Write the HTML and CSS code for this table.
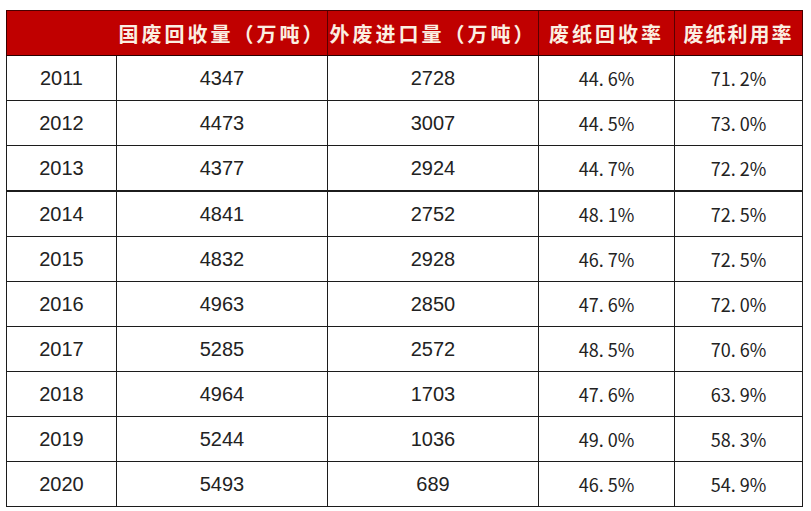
FILE: index.html
```html
<!DOCTYPE html>
<html lang="zh-CN">
<head>
<meta charset="utf-8">
<link rel="stylesheet" href="styles.css">
</head>
<body>
<table class="data">
  <colgroup>
    <col class="c1"><col class="c2"><col class="c3"><col class="c4"><col class="c5">
  </colgroup>
  <thead>
    <tr>
      <th class="h-first"></th>
      <th class="h-plain">国废回收量（万吨）</th>
      <th>外废进口量（万吨）</th>
      <th>废纸回收率</th>
      <th>废纸利用率</th>
    </tr>
  </thead>
  <tbody>
    <tr><td>2011</td><td>4347</td><td class="grey">2728</td><td class="pct">44<span class="dot">.</span>6%</td><td class="pct">71<span class="dot">.</span>2%</td></tr>
    <tr><td>2012</td><td>4473</td><td class="grey">3007</td><td class="pct">44<span class="dot">.</span>5%</td><td class="pct">73<span class="dot">.</span>0%</td></tr>
    <tr class="thick"><td>2013</td><td>4377</td><td class="grey">2924</td><td class="pct">44<span class="dot">.</span>7%</td><td class="pct">72<span class="dot">.</span>2%</td></tr>
    <tr><td>2014</td><td>4841</td><td class="grey">2752</td><td class="pct">48<span class="dot">.</span>1%</td><td class="pct">72<span class="dot">.</span>5%</td></tr>
    <tr><td>2015</td><td>4832</td><td class="grey">2928</td><td class="pct">46<span class="dot">.</span>7%</td><td class="pct">72<span class="dot">.</span>5%</td></tr>
    <tr><td>2016</td><td>4963</td><td class="grey">2850</td><td class="pct">47<span class="dot">.</span>6%</td><td class="pct">72<span class="dot">.</span>0%</td></tr>
    <tr><td>2017</td><td>5285</td><td class="grey">2572</td><td class="pct">48<span class="dot">.</span>5%</td><td class="pct">70<span class="dot">.</span>6%</td></tr>
    <tr><td>2018</td><td>4964</td><td class="grey">1703</td><td class="pct">47<span class="dot">.</span>6%</td><td class="pct">63<span class="dot">.</span>9%</td></tr>
    <tr><td>2019</td><td>5244</td><td class="grey">1036</td><td class="pct">49<span class="dot">.</span>0%</td><td class="pct">58<span class="dot">.</span>3%</td></tr>
    <tr><td>2020</td><td>5493</td><td class="grey">689</td><td class="pct">46<span class="dot">.</span>5%</td><td class="pct">54<span class="dot">.</span>9%</td></tr>
  </tbody>
</table>
</body>
</html>
```
FILE: styles.css
```css
html, body {
  margin: 0;
  padding: 0;
  background: #ffffff;
}
body {
  padding: 10px 0 0 6px;
}
.data {
  border-collapse: collapse;
  table-layout: fixed;
  width: 796px;
  font-family: "Liberation Sans", Arial, sans-serif;
  color: #222222;
}
.c1 { width: 110px; }
.c2 { width: 211px; }
.c3 { width: 211px; }
.c4 { width: 136px; }
.c5 { width: 128px; }

.data thead th {
  background: #c00000;
  height: 44px;
  padding: 0;
  border-top: 1px solid #4a0000;
  border-bottom: 1px solid #2a0000;
  border-left: 1px solid #5a0000;
  color: #fbefe2;
  font-family: "Noto Sans CJK SC", sans-serif;
  font-weight: 700;
  font-size: 20px;
  letter-spacing: 3px;
  text-align: center;
  white-space: nowrap;
  overflow: hidden;
}
.data thead th.h-first {
  border-left: 1px solid #3a0000;
}
.data thead th.h-plain {
  border-left: 1px solid #c00000;
}
.data thead th:last-child {
  border-right: 1px solid #4a0000;
  letter-spacing: 2px;
}
.data tbody td {
  height: 44px;
  padding: 0;
  border: 1px solid #1c1c1c;
  font-size: 20px;
  text-align: center;
}
.data tbody td.grey {
  border-left-color: #8a8a8a;
}
.data tbody td.pct {
  font-family: "Noto Sans CJK SC", sans-serif;
  font-size: 18px;
  letter-spacing: 0;
}
.dot {
  margin-right: 4px;
}
.data tbody tr.thick td {
  border-bottom: 2px solid #1c1c1c;
}
```
